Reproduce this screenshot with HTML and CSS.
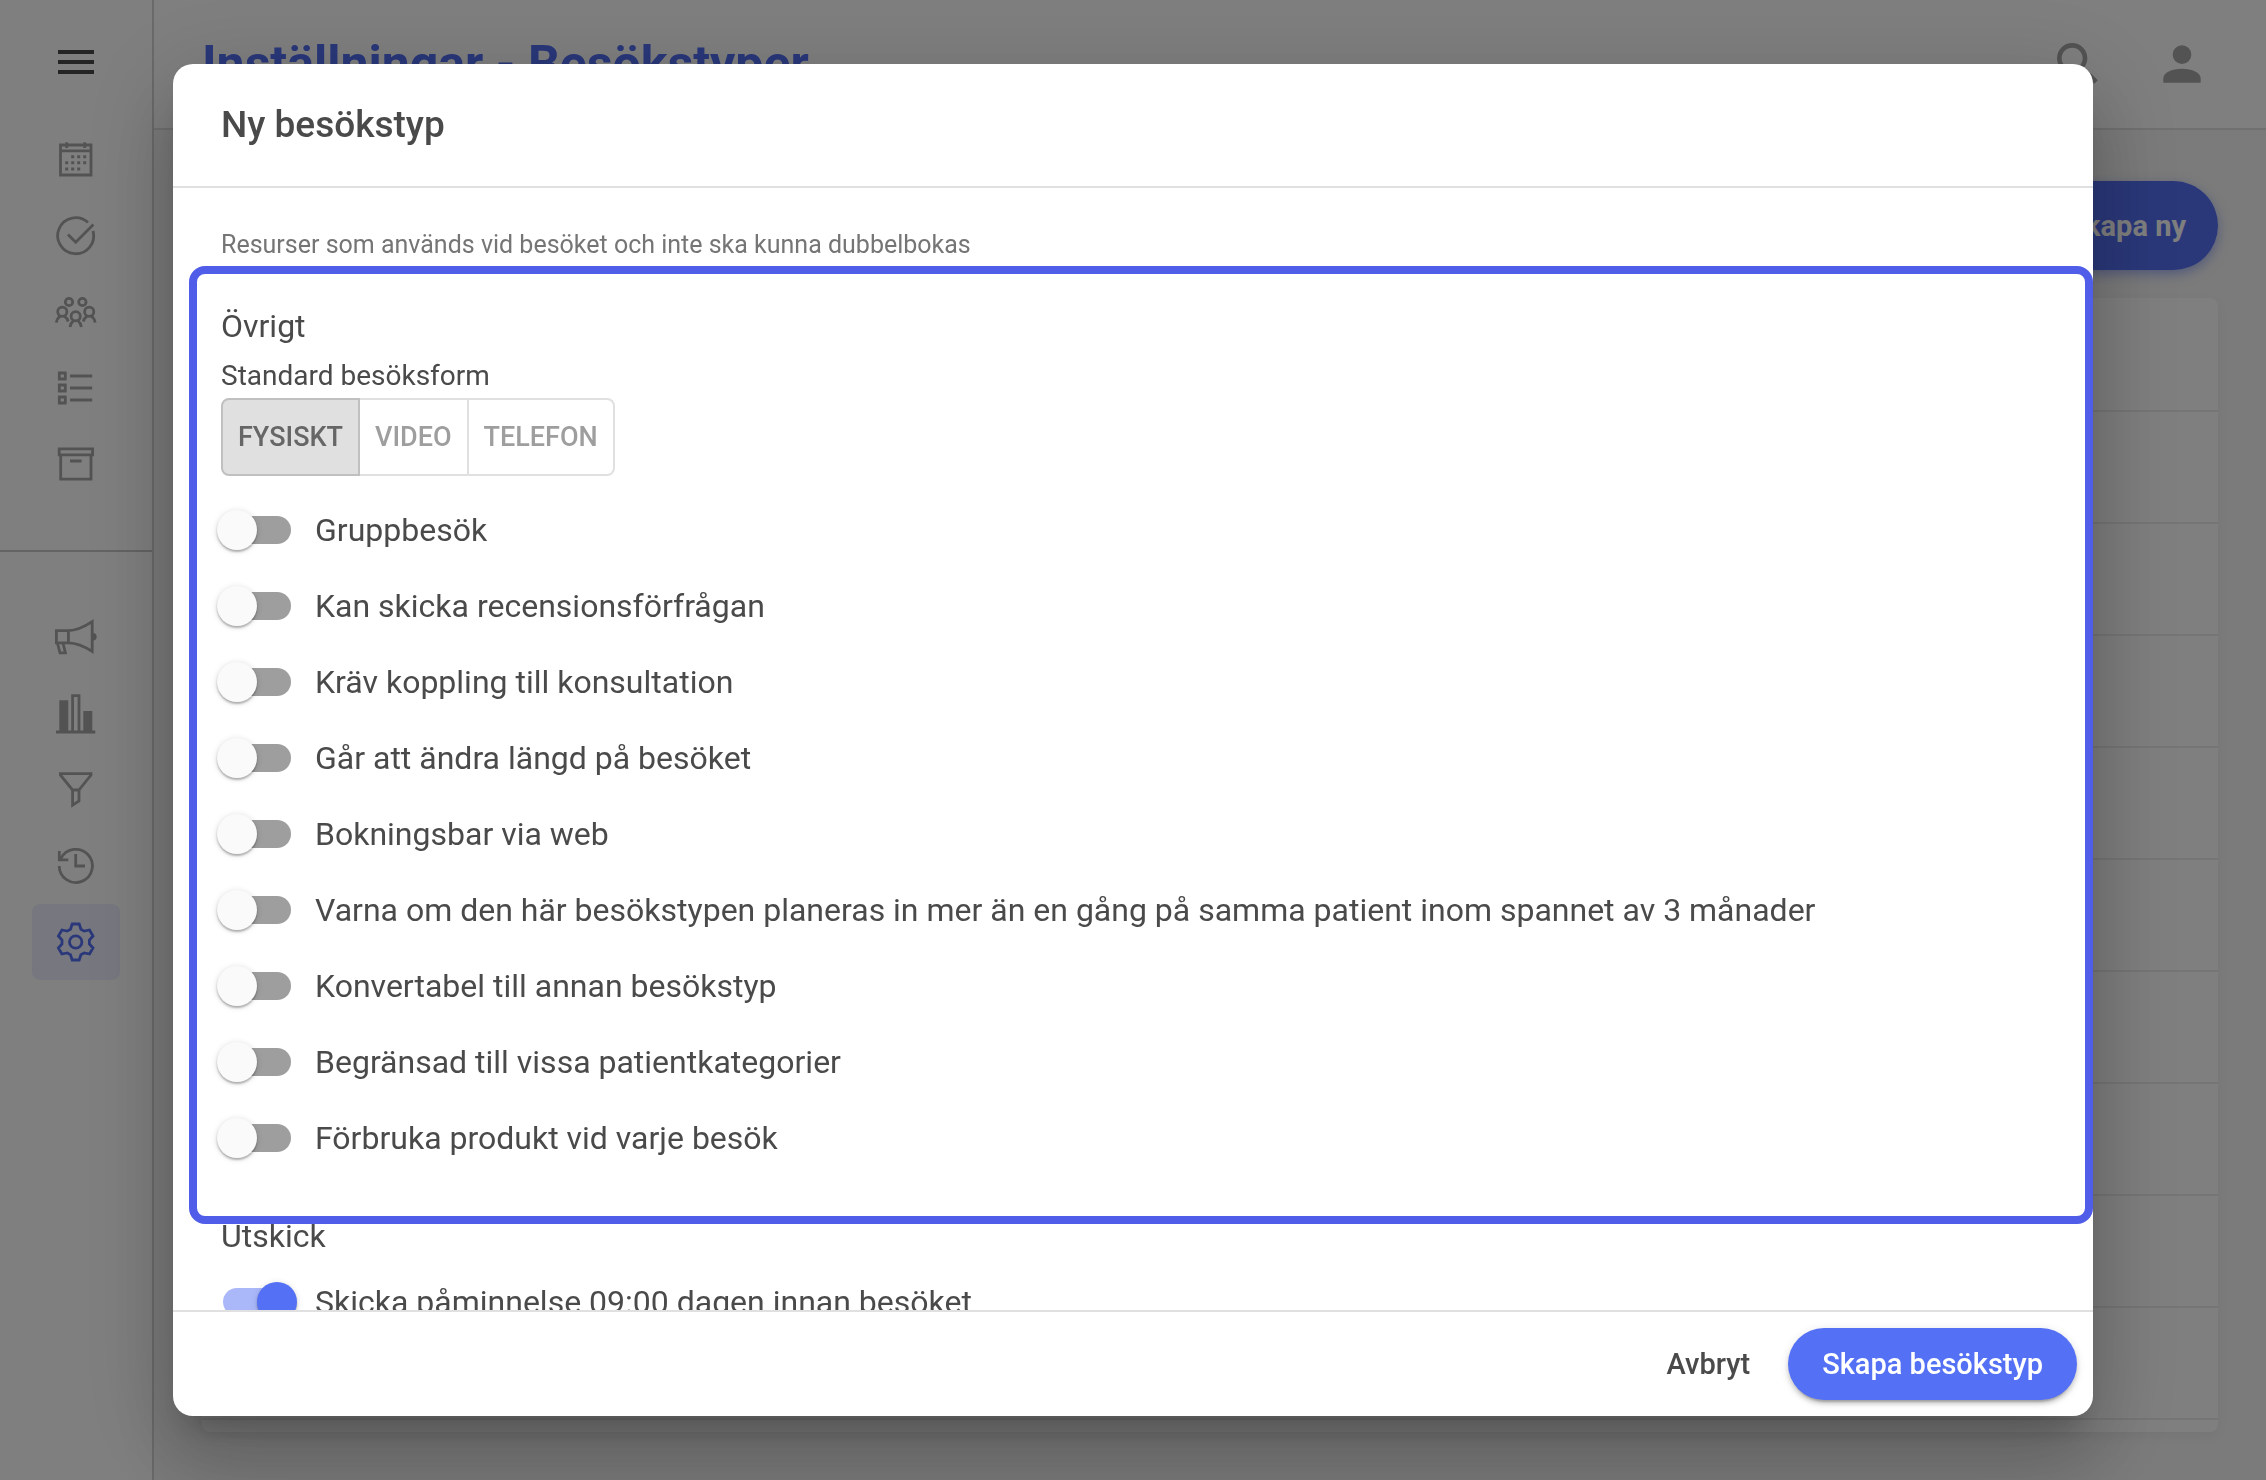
FILE: index.html
```html
<!DOCTYPE html>
<html lang="sv">
<head>
<meta charset="utf-8">
<meta name="viewport" content="width=device-width, initial-scale=1">
<title>Inställningar - Besökstyper</title>
<link rel="stylesheet" href="styles.css">
</head>
<body>
<div class="app">
  <aside class="sidebar">
    <button class="menu-button" type="button" aria-label="Meny">
      <svg class="icon" viewBox="0 0 48 48"><path d="M6 14H42M6 24H42M6 34H42" stroke-width="4"/></svg>
    </button>
    <nav class="nav">
      <a class="nav-item" href="#" aria-label="Kalender"><svg class="icon" viewBox="0 0 48 48"><path d="M8.5 9H39V39H8.5ZM8.5 14.8H39M14.7 6.3V12M32.7 6.3V12"/><path d="M19.2 20.7h3m3 0h3m3 0h3M13.2 26.8h3m3 0h3m3 0h3m3 0h3M13.2 32.9h3m3 0h3m3 0h3" stroke-width="3"/></svg></a>
      <a class="nav-item" href="#" aria-label="Uppgifter"><svg class="icon" viewBox="0 0 48 48"><path d="M36 10.6A18 18 0 1 0 41 18.8M16 22.4L23.7 30.2L41.4 12.6"/></svg></a>
      <a class="nav-item" href="#" aria-label="Patienter"><svg class="icon" viewBox="0 0 48 48"><circle cx="17" cy="14" r="3.7"/><circle cx="30.4" cy="14" r="3.7"/><circle cx="10.3" cy="23.8" r="4.6"/><circle cx="37.2" cy="23.8" r="4.6"/><circle cx="23.7" cy="28.3" r="4.6"/><path d="M4.4 34.7C4.8 31.5 6.2 29.6 8.2 28.2M12.4 28.2C14.2 29.3 15.5 31 16.2 33.5M31.2 33.5C31.9 31 33.3 29.3 35.1 28.2M39.3 28.2C41.3 29.6 42.7 31.5 43.1 34.7M18 39C18.4 36 19.6 34.2 21.4 32.8M26 32.8C27.8 34.2 29 36 29.4 39"/></svg></a>
      <a class="nav-item" href="#" aria-label="Listor"><svg class="icon" viewBox="0 0 48 48"><path d="M7.3 9H13.3V15H7.3ZM7.3 21H13.3V27H7.3ZM7.3 33H13.3V39H7.3ZM18 12H40.2M18 24H40.2M18 36H40.2"/></svg></a>
      <a class="nav-item" href="#" aria-label="Arkiv"><svg class="icon" viewBox="0 0 48 48"><path d="M7.2 8.8H40.6V14.8H7.2ZM8.7 14.8V39.2H39V14.8M18 21H29.6"/></svg></a>
    </nav>
    <nav class="nav nav-secondary">
      <a class="nav-item" href="#" aria-label="Utskick"><svg class="icon" viewBox="0 0 48 48"><path d="M4.4 16.6H16.4V28.8H4.4ZM16.4 16.6C26 16.4 33.5 12 40.2 7.6V37.4C33.5 33 26 29 16.4 28.8M5.4 29L8 38.8H13.4L11 29"/><path class="solid" d="M41 19A3.7 3.7 0 0 1 41 26.4Z"/></svg></a>
      <a class="nav-item" href="#" aria-label="Statistik"><svg class="icon" viewBox="0 0 48 48"><path d="M4 42H43.3M20.6 42V5.6H27V42"/><path class="solid" d="M7.3 10.3H16.3V42H7.3ZM31.3 21H40.3V42H31.3Z"/></svg></a>
      <a class="nav-item" href="#" aria-label="Filter"><svg class="icon" viewBox="0 0 48 48"><path d="M8.4 7.7H39V9L27 24V35L20.6 39.2V24L8.4 9ZM20.6 24H27"/></svg></a>
      <a class="nav-item" href="#" aria-label="Historik"><svg class="icon" viewBox="0 0 48 48"><path d="M7.2 24A16.6 16.6 0 1 0 9 16.4M7.3 9V17.8H16.3M23.7 12V24H33"/></svg></a>
      <a class="nav-item nav-item-active" href="#" aria-label="Inställningar" aria-current="page"><svg class="icon" viewBox="-23.7 -24 48 48"><path d="M-5.2-12.8L-3.5-18H3.5L5.2-12.8L8.5-10.9L13.8-12L17.3-6L13.7-1.9V1.9L17.3 6L13.8 12L8.5 10.9L5.2 12.8L3.5 18H-3.5L-5.2 12.8L-8.5 10.9L-13.8 12L-17.3 6L-13.7 1.9V-1.9L-17.3-6L-13.8-12L-8.5-10.9Z"/><circle r="6.2"/></svg></a>
    </nav>
  </aside>
  <div class="page">
    <header class="topbar">
      <h1 class="page-title">Inställningar - Besökstyper</h1>
      <div class="topbar-actions">
        <button class="icon-button" type="button" aria-label="Sök"><svg viewBox="0 0 24 24"><path d="M9.5,3A6.5,6.5 0 0,1 16,9.5C16,11.11 15.41,12.59 14.44,13.73L14.71,14H15.5L20.5,19L19,20.5L14,15.5V14.71L13.73,14.44C12.59,15.41 11.11,16 9.5,16A6.5,6.5 0 0,1 3,9.5A6.5,6.5 0 0,1 9.5,3M9.5,5C7,5 5,7 5,9.5C5,12 7,14 9.5,14C12,14 14,12 14,9.5C14,7 12,5 9.5,5Z"/></svg></button>
        <button class="icon-button" type="button" aria-label="Konto"><svg viewBox="0 0 24 24"><path d="M12,4A4,4 0 0,1 16,8A4,4 0 0,1 12,12A4,4 0 0,1 8,8A4,4 0 0,1 12,4M12,14C16.42,14 20,15.79 20,18V20H4V18C4,15.79 7.58,14 12,14Z"/></svg></button>
      </div>
    </header>
    <main class="content">
      <button class="create-button" type="button">Skapa ny</button>
      <ul class="card">
        <li></li><li></li><li></li><li></li><li></li><li></li><li></li><li></li><li></li><li></li>
      </ul>
    </main>
  </div>
</div>

<div class="overlay">
  <form class="dialog" role="dialog" aria-modal="true" aria-labelledby="dialog-title">
    <header class="dialog-header"><h2 class="dialog-title" id="dialog-title">Ny besökstyp</h2></header>
    <div class="dialog-body">
      <p class="hint">Resurser som används vid besöket och inte ska kunna dubbelbokas</p>
      <section class="section section-highlighted">
        <h3 class="section-title">Övrigt</h3>
        <p class="field-label" id="visit-form">Standard besöksform</p>
        <div class="toggle-group" role="group" aria-labelledby="visit-form">
          <button class="toggle toggle-selected" type="button" aria-pressed="true">FYSISKT</button>
          <button class="toggle" type="button" aria-pressed="false">VIDEO</button>
          <button class="toggle" type="button" aria-pressed="false">TELEFON</button>
        </div>
        <div class="switches">
          <label class="switch-row"><input class="switch" type="checkbox"><span>Gruppbesök</span></label>
          <label class="switch-row"><input class="switch" type="checkbox"><span>Kan skicka recensionsförfrågan</span></label>
          <label class="switch-row"><input class="switch" type="checkbox"><span>Kräv koppling till konsultation</span></label>
          <label class="switch-row"><input class="switch" type="checkbox"><span>Går att ändra längd på besöket</span></label>
          <label class="switch-row"><input class="switch" type="checkbox"><span>Bokningsbar via web</span></label>
          <label class="switch-row"><input class="switch" type="checkbox"><span>Varna om den här besökstypen planeras in mer än en gång på samma patient inom spannet av 3 månader</span></label>
          <label class="switch-row"><input class="switch" type="checkbox"><span>Konvertabel till annan besökstyp</span></label>
          <label class="switch-row"><input class="switch" type="checkbox"><span>Begränsad till vissa patientkategorier</span></label>
          <label class="switch-row"><input class="switch" type="checkbox"><span>Förbruka produkt vid varje besök</span></label>
        </div>
      </section>
      <section class="section">
        <h3 class="section-title">Utskick</h3>
        <label class="switch-row"><input class="switch" type="checkbox" checked><span>Skicka påminnelse 09:00 dagen innan besöket</span></label>
      </section>
    </div>
    <footer class="dialog-footer">
      <button class="text-button" type="button">Avbryt</button>
      <button class="primary-button" type="button">Skapa besökstyp</button>
    </footer>
  </form>
</div>
</body>
</html>
```
FILE: styles.css
```css
:root {
  --primary: #5470f5;
  --highlight: #4f5de8;
  --text: #4a4a4a;
  --muted: #757575;
  --icon: #a6a6a6;
  --line: #e0e0e0;
}

* { box-sizing: border-box; }

body {
  margin: 0;
  height: 100vh;
  overflow: hidden;
  font-family: Roboto, "Liberation Sans", sans-serif;
  color: var(--text);
  background: #f6f6f6;
}

h1, h2, h3, p, ul { margin: 0; padding: 0; }

button {
  border: 0;
  padding: 0;
  background: none;
  font: inherit;
  color: inherit;
  cursor: pointer;
}

/* Page behind the dialog */

.app { display: flex; min-height: 100vh; }

.sidebar {
  flex: none;
  width: 154px;
  padding-top: 38px;
  background: #fff;
  border-right: 2px solid #d4d4d4;
}

.menu-button {
  display: block;
  margin: 0 auto 36px;
  height: 48px;
  color: #4a4a4a;
}

.icon {
  display: block;
  width: 48px;
  height: 48px;
  fill: none;
  stroke: currentColor;
  stroke-width: 2.8;
}

.icon .solid { fill: currentColor; stroke: none; }

.nav { padding: 0 32px; }

.nav-secondary {
  margin-top: 48px;
  padding-top: 48px;
  border-top: 2px solid #c8c8c8;
}

.nav-item {
  display: flex;
  align-items: center;
  justify-content: center;
  height: 76px;
  border-radius: 8px;
  color: var(--icon);
}

.nav-item-active {
  color: var(--primary);
  background: #eef1fe;
}

.page { flex: 1; min-width: 0; }

.topbar {
  display: flex;
  align-items: center;
  justify-content: space-between;
  height: 130px;
  padding: 0 56px 0 48px;
  background: #fff;
  border-bottom: 2px solid var(--line);
}

.page-title {
  font-size: 50px;
  line-height: 64px;
  font-weight: 700;
  color: var(--primary);
}

.topbar-actions { display: flex; gap: 48px; }

.icon-button { height: 56px; color: var(--icon); }

.icon-button svg {
  display: block;
  width: 56px;
  height: 56px;
  fill: currentColor;
}

.content {
  display: flex;
  flex-direction: column;
  gap: 28px;
  padding: 51px 48px 48px;
}

.create-button {
  align-self: flex-end;
  height: 89px;
  padding: 0 32px;
  border-radius: 45px;
  background: var(--primary);
  color: #fff;
  font-size: 29px;
  font-weight: 700;
  box-shadow: 0 4px 12px rgba(84, 112, 245, .5);
}

.card {
  list-style: none;
  padding-bottom: 12px;
  border-radius: 8px;
  background: #fff;
  box-shadow: 0 4px 12px rgba(0, 0, 0, .05);
}

.card li { height: 112px; border-bottom: 2px solid #ececec; }

.card li:first-child { height: 114px; }

/* Dialog */

.overlay {
  position: fixed;
  inset: 0;
  display: flex;
  justify-content: center;
  padding: 64px;
  background: rgba(0, 0, 0, .5);
}

.dialog {
  display: flex;
  flex-direction: column;
  flex: 1;
  max-width: 1920px;
  border-radius: 20px;
  overflow: hidden;
  background: #fff;
  box-shadow:
    0 22px 30px -14px rgba(0, 0, 0, .2),
    0 48px 76px 6px rgba(0, 0, 0, .14),
    0 18px 92px 16px rgba(0, 0, 0, .12);
}

.dialog-header {
  flex: none;
  padding: 37px 48px;
  border-bottom: 2px solid var(--line);
}

.dialog-title {
  font-size: 37px;
  line-height: 48px;
  font-weight: 500;
}

.dialog-body {
  flex: 1;
  min-height: 0;
  padding: 41px 48px;
  overflow: auto;
  scrollbar-width: none;
}

.hint {
  margin-bottom: 41px;
  font-size: 25px;
  line-height: 32px;
  color: var(--muted);
}

.section { position: relative; margin-bottom: 36px; }

.section-highlighted::after {
  content: "";
  position: absolute;
  inset: -36px -48px -48px -32px;
  border: 8px solid var(--highlight);
  border-radius: 16px;
  pointer-events: none;
  z-index: 1;
}

.section-title {
  margin-bottom: 4px;
  font-size: 32px;
  line-height: 48px;
  font-weight: 400;
}

.field-label {
  padding-top: 2px;
  margin-bottom: 2px;
  font-size: 28px;
  line-height: 40px;
}

.toggle-group {
  display: flex;
  width: max-content;
  margin-bottom: 16px;
}

.toggle {
  height: 78px;
  padding: 0 15px;
  border: 2px solid var(--line);
  border-left-width: 0;
  color: #9e9e9e;
  font-size: 27px;
  font-weight: 500;
}

.toggle:first-child { border-left-width: 2px; border-radius: 8px 0 0 8px; }
.toggle:last-child { border-radius: 0 8px 8px 0; }

.toggle-selected {
  background: #e0e0e0;
  border-color: #c0c0c0;
  color: #666;
}

.switch-row {
  display: flex;
  align-items: center;
  gap: 24px;
  height: 76px;
  padding-left: 2px;
  font-size: 32px;
  line-height: 48px;
}

.switch {
  appearance: none;
  position: relative;
  flex: none;
  width: 68px;
  height: 28px;
  margin: 0;
  border-radius: 14px;
  background: #9e9e9e;
}

.switch::before {
  content: "";
  position: absolute;
  top: -6px;
  left: -6px;
  width: 40px;
  height: 40px;
  border-radius: 50%;
  background: #fafafa;
  box-shadow: 0 2px 2px rgba(0, 0, 0, .25), 0 1px 6px rgba(0, 0, 0, .15);
}

.switch:checked { background: #aab8fa; }

.switch:checked::before {
  left: 34px;
  background: var(--primary);
}

.dialog-footer {
  flex: none;
  display: flex;
  justify-content: flex-end;
  gap: 6px;
  padding: 16px;
  border-top: 2px solid var(--line);
  font-size: 29px;
  font-weight: 500;
}

.text-button { height: 72px; padding: 0 32px; }

.primary-button {
  height: 72px;
  padding: 0 34px;
  border-radius: 36px;
  background: var(--primary);
  color: #fff;
  box-shadow: 0 6px 2px -4px rgba(0, 0, 0, .2), 0 4px 4px rgba(0, 0, 0, .14), 0 2px 10px rgba(0, 0, 0, .12);
}
```
